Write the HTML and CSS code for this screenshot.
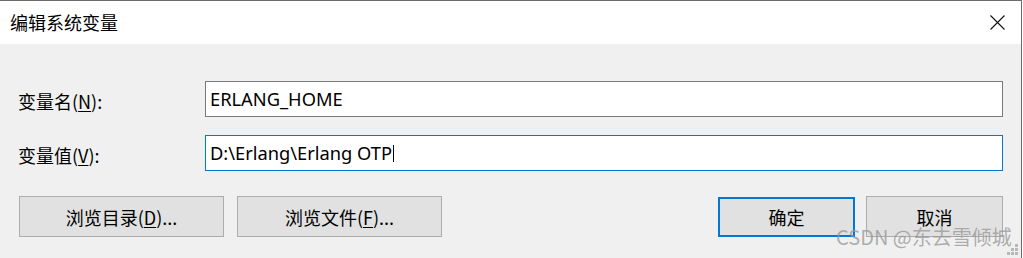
FILE: index.html
```html
<!DOCTYPE html>
<html lang="zh">
<head>
<meta charset="utf-8">
<title>编辑系统变量</title>
<link rel="stylesheet" href="styles.css">
</head>
<body>
<div class="window">
  <div class="titlebar">
    <span class="title">编辑系统变量</span>
    <svg class="close" width="15" height="15" viewBox="0 0 15 15"><path d="M0.5 0.5 L14.5 14.5 M14.5 0.5 L0.5 14.5" stroke="#111" stroke-width="1.1" fill="none"/></svg>
  </div>
  <div class="content">
    <div class="row">
      <label class="label">变量名(<u>N</u>):</label>
      <div class="field">ERLANG_HOME</div>
    </div>
    <div class="row">
      <label class="label">变量值(<u>V</u>):</label>
      <div class="field focused">D:\Erlang\Erlang OTP<span class="caret"></span></div>
    </div>
    <div class="buttons">
      <div class="left-buttons">
        <div class="btn wide">浏览目录(<u>D</u>)...</div>
        <div class="btn wide">浏览文件(<u>F</u>)...</div>
      </div>
      <div class="right-buttons">
        <div class="btn narrow default">确定</div>
        <div class="btn narrow">取消</div>
      </div>
    </div>
    <div class="watermark">CSDN @东去雪倾城</div>
    <svg class="grip" width="14" height="14" viewBox="0 0 14 14">
      <g fill="#b8b8b8">
        <rect x="10" y="0" width="3" height="3"/>
        <rect x="6" y="4" width="3" height="3"/>
        <rect x="10" y="4" width="3" height="3"/>
        <rect x="2" y="8" width="3" height="3"/>
        <rect x="6" y="8" width="3" height="3"/>
        <rect x="10" y="8" width="3" height="3"/>
      </g>
    </svg>
  </div>
</div>
</body>
</html>
```
FILE: styles.css
```css
* { box-sizing: border-box; }
html, body { margin: 0; padding: 0; background: #ffffff; }
body {
  font-family: "Noto Sans", "Noto Sans CJK SC", sans-serif;
  color: #000;
  width: 1023px;
  height: 258px;
  overflow: hidden;
}
.window {
  width: 1022px;
  height: 258px;
  border-top: 1px solid #6b6b6b;
  border-right: 1px solid #6b6b6b;
  display: flex;
  flex-direction: column;
}
.titlebar {
  height: 43px;
  background: #fff;
  display: flex;
  align-items: center;
  justify-content: space-between;
  padding-left: 10px;
  padding-right: 16px;
  flex: none;
}
.title {
  font-family: "Noto Sans CJK SC", sans-serif;
  font-size: 18px;
  line-height: 20px;
  margin-top: -1px;
}
.close { display: block; }
.content {
  flex: 1;
  background: #f0f0f0;
  padding: 37px 18px 0 18px;
  position: relative;
}
.row {
  display: flex;
  align-items: center;
  height: 36px;
}
.row + .row { margin-top: 18px; }
.label {
  width: 187px;
  font-family: "Noto Sans CJK SC", sans-serif;
  font-size: 18px;
  line-height: 20px;
  padding-top: 4px;
}
.label u, .btn u { text-underline-offset: 2px; text-decoration-thickness: 1px; }
.field {
  width: 798px;
  height: 36px;
  background: #fff;
  border: 1px solid #7a7a7a;
  padding-left: 4px;
  font-family: "Noto Sans", sans-serif;
  font-size: 18.3px;
  line-height: 32px;
  display: flex;
  align-items: center;
  white-space: pre;
}
.field.focused { border-color: #0078d7; }
.caret {
  display: inline-block;
  width: 1px;
  height: 17px;
  background: #000;
  margin-left: 1px;
  margin-top: 1px;
}
.buttons {
  display: flex;
  justify-content: space-between;
  margin-top: 25px;
  padding-left: 1px;
}
.left-buttons, .right-buttons { display: flex; }
.left-buttons { gap: 13px; }
.right-buttons { gap: 11px; }
.btn {
  height: 41px;
  background: #e1e1e1;
  border: 1px solid #adadad;
  display: flex;
  align-items: center;
  justify-content: center;
  font-family: "Noto Sans CJK SC", sans-serif;
  font-size: 18px;
  line-height: 20px;
}
.btn.wide { width: 205px; }
.btn.narrow { width: 137px; }
.btn.default { border: 2px solid #0078d7; height: 40px; margin-top: 1px; }
.watermark {
  position: absolute;
  left: 836px;
  top: 181px;
  font-family: "Noto Sans CJK SC", sans-serif;
  font-size: 20px;
  line-height: 24px;
  color: rgba(150, 150, 150, 0.75);
  white-space: nowrap;
}
.grip {
  position: absolute;
  right: 2px;
  bottom: 0px;
}
```
